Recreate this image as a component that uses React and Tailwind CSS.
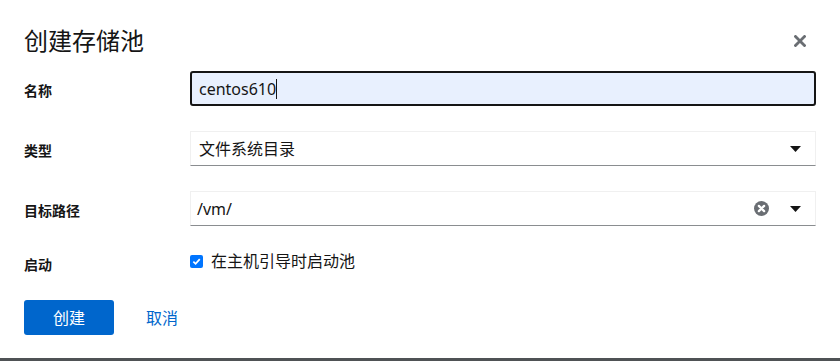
import React from 'react';

const font = { fontFamily: '"Noto Sans", "Noto Sans CJK SC", sans-serif' };

function Caret() {
    return (
        <svg width="11" height="6" viewBox="0 0 11 6" className="block">
            <path d="M0 0 H11 L5.5 6 Z" fill="#151515" />
        </svg>
    );
}

function ClearIcon() {
    return (
        <svg width="15" height="15" viewBox="0 0 16 16" className="block">
            <circle cx="8" cy="8" r="8" fill="#6a6e73" />
            <path d="M5.2 5.2 L10.8 10.8 M10.8 5.2 L5.2 10.8" stroke="#fff" strokeWidth="2.4" strokeLinecap="round" />
        </svg>
    );
}

function Label({ children }) {
    return <div className="flex items-center pt-[3px] text-[14px] font-bold text-[#151515]">{children}</div>;
}

export default function App() {
    return (
        <div className="w-[840px] h-[361px] bg-white flex flex-col overflow-hidden" style={font}>
            <div className="h-[358px] px-6">
                <div className="flex items-center justify-between pt-[24px]">
                    <h1 className="text-[24px] leading-[34px] text-[#151515]">创建存储池</h1>
                    <svg width="12" height="12" viewBox="0 0 12 12" className="mr-[10px]">
                        <path d="M1.5 1.5 L10.5 10.5 M10.5 1.5 L1.5 10.5" stroke="#6a6e73" strokeWidth="2.8" strokeLinecap="square" />
                    </svg>
                </div>

                <div className="mt-[13px] grid grid-cols-[166px_1fr] gap-y-[25px]">
                    <Label>名称</Label>
                    <div className="h-[35px] flex items-center border-2 border-[#151515] rounded-[3px] bg-[#e8f0fe] pl-[7px] text-[16px] text-[#151515]">
                        centos610
                        <span className="inline-block w-px h-[20px] bg-[#151515]" />
                    </div>

                    <Label>类型</Label>
                    <div className="h-[35px] flex items-center justify-between border border-[#f0f0f0] border-b-[#8a8d90] pl-2 pr-[14px] text-[16px] text-[#151515]">
                        <span>文件系统目录</span>
                        <Caret />
                    </div>

                    <Label>目标路径</Label>
                    <div className="h-[35px] flex items-center border border-[#f0f0f0] border-b-[#8a8d90] pl-[6px] pr-[14px] text-[16px] text-[#151515]">
                        <span className="flex-1">/vm/</span>
                        <ClearIcon />
                        <span className="ml-[21px]"><Caret /></span>
                    </div>

                    <Label>启动</Label>
                    <div className="h-[20px] flex items-center gap-2 text-[16px] text-[#151515]">
                        <div className="w-[13px] h-[13px] rounded-[2px] bg-[#0075ff] flex items-center justify-center">
                            <svg width="9" height="9" viewBox="0 0 10 10">
                                <path d="M1.5 5.2 L4 7.6 L8.6 2.4" stroke="#fff" strokeWidth="1.9" fill="none" />
                            </svg>
                        </div>
                        <span>在主机引导时启动池</span>
                    </div>
                </div>

                <div className="mt-[25px] flex items-center">
                    <button className="w-[90px] h-[35px] rounded-[3px] bg-[#0066cc] text-white text-[16px]">创建</button>
                    <span className="ml-[32px] text-[16px] text-[#0066cc]">取消</span>
                </div>
            </div>
            <div className="h-[3px] bg-[#4f5255]" />
        </div>
    );
}
